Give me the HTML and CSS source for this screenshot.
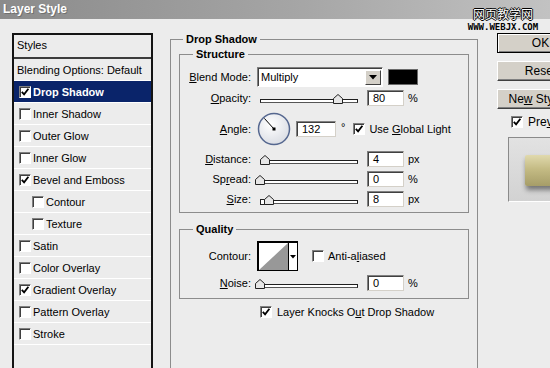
FILE: index.html
```html
<!DOCTYPE html>
<html lang="en">
<head>
    <meta charset="UTF-8">
    <title>Layer Style</title>
    <link rel="stylesheet" href="styles.css">
</head>
<body>
    <div class="titlebar">Layer Style</div>
    <div class="watermark">
        <div class="wm-cn">网页教学网</div>
        <div class="wm-en">WWW.WEBJX.COM</div>
    </div>

    <div class="dialog">
        <div class="styles-list">
            <div class="list-head">Styles</div>
            <div class="list-row plain">Blending Options: Default</div>
            <div class="list-row selected"><span class="check"><svg viewBox="0 0 10 10"><path d="M1.8 4.8l2.3 2.6L8.4 1.8" /></svg></span>Drop Shadow</div>
            <div class="list-row"><span class="check"></span>Inner Shadow</div>
            <div class="list-row"><span class="check"></span>Outer Glow</div>
            <div class="list-row"><span class="check"></span>Inner Glow</div>
            <div class="list-row"><span class="check"><svg viewBox="0 0 10 10"><path d="M1.8 4.8l2.3 2.6L8.4 1.8" /></svg></span>Bevel and Emboss</div>
            <div class="list-row sub"><span class="check"></span>Contour</div>
            <div class="list-row sub"><span class="check"></span>Texture</div>
            <div class="list-row"><span class="check"></span>Satin</div>
            <div class="list-row"><span class="check"></span>Color Overlay</div>
            <div class="list-row"><span class="check"><svg viewBox="0 0 10 10"><path d="M1.8 4.8l2.3 2.6L8.4 1.8" /></svg></span>Gradient Overlay</div>
            <div class="list-row"><span class="check"></span>Pattern Overlay</div>
            <div class="list-row"><span class="check"></span>Stroke</div>
        </div>

        <div class="main">
            <fieldset class="group outer">
                <legend>Drop Shadow</legend>

                <fieldset class="group structure">
                    <legend>Structure</legend>

                    <div class="row blend-row">
                        <span class="lbl"><u>B</u>lend Mode:</span>
                        <div class="select">
                            <span class="select-text">Multiply</span>
                            <span class="drop-btn"><svg viewBox="0 0 8 5"><path d="M0 0h8L4 4.5z" /></svg></span>
                        </div>
                        <span class="swatch"></span>
                    </div>

                    <div class="row opacity-row">
                        <span class="lbl"><u>O</u>pacity:</span>
                        <div class="slider">
                            <div class="track"></div>
                            <svg class="thumb" style="left: 76px" viewBox="0 0 10 10"><path d="M5 0.5L9.5 4.5V9.5H0.5V4.5Z" /></svg>
                        </div>
                        <span class="field">80</span>
                        <span class="unit">%</span>
                    </div>

                    <div class="row angle-row">
                        <span class="lbl"><u>A</u>ngle:</span>
                        <svg class="dial" viewBox="0 0 34 34">
                            <defs>
                                <radialGradient id="dialfill" cx="40%" cy="35%" r="70%">
                                    <stop offset="0" stop-color="#ffffff" />
                                    <stop offset="1" stop-color="#d9dce3" />
                                </radialGradient>
                            </defs>
                            <circle cx="17" cy="17" r="15.5" fill="url(#dialfill)" stroke="#55678f" stroke-width="1.5" />
                            <line x1="17" y1="17" x2="7.4" y2="6.4" stroke="#000" stroke-width="1" />
                            <rect x="15.5" y="15.5" width="3" height="3" fill="#000" />
                        </svg>
                        <span class="field wide">132</span>
                        <span class="degree">°</span>
                        <span class="check gl"><svg viewBox="0 0 10 10"><path d="M1.8 4.8l2.3 2.6L8.4 1.8" /></svg></span>
                        <span class="cb-text">Use <u>G</u>lobal Light</span>
                    </div>

                    <div class="row distance-row">
                        <span class="lbl"><u>D</u>istance:</span>
                        <div class="slider">
                            <div class="track"></div>
                            <svg class="thumb" style="left: 3px" viewBox="0 0 10 10"><path d="M5 0.5L9.5 4.5V9.5H0.5V4.5Z" /></svg>
                        </div>
                        <span class="field">4</span>
                        <span class="unit">px</span>
                    </div>

                    <div class="row spread-row">
                        <span class="lbl">Sp<u>r</u>ead:</span>
                        <div class="slider">
                            <div class="track"></div>
                            <svg class="thumb" style="left: -2px" viewBox="0 0 10 10"><path d="M5 0.5L9.5 4.5V9.5H0.5V4.5Z" /></svg>
                        </div>
                        <span class="field">0</span>
                        <span class="unit">%</span>
                    </div>

                    <div class="row size-row">
                        <span class="lbl"><u>S</u>ize:</span>
                        <div class="slider">
                            <div class="track"></div>
                            <span class="stop"></span>
                            <svg class="thumb" style="left: 7px" viewBox="0 0 10 10"><path d="M5 0.5L9.5 4.5V9.5H0.5V4.5Z" /></svg>
                        </div>
                        <span class="field">8</span>
                        <span class="unit">px</span>
                    </div>
                </fieldset>

                <fieldset class="group quality">
                    <legend>Quality</legend>

                    <div class="row contour-row">
                        <span class="lbl">Contour:</span>
                        <div class="contour">
                            <svg class="contour-preview" viewBox="0 0 29 27" preserveAspectRatio="none">
                                <rect width="29" height="27" fill="#fff" />
                                <path d="M0 27L29 0V27Z" fill="#989898" />
                            </svg>
                            <span class="contour-btn"><svg viewBox="0 0 6 4"><path d="M0 0h6L3 3.5z" /></svg></span>
                        </div>
                        <span class="check aa"></span>
                        <span class="cb-text">Anti-a<u>l</u>iased</span>
                    </div>

                    <div class="row noise-row">
                        <span class="lbl"><u>N</u>oise:</span>
                        <div class="slider">
                            <div class="track"></div>
                            <svg class="thumb" style="left: -2px" viewBox="0 0 10 10"><path d="M5 0.5L9.5 4.5V9.5H0.5V4.5Z" /></svg>
                        </div>
                        <span class="field">0</span>
                        <span class="unit">%</span>
                    </div>
                </fieldset>

                <div class="knock-row">
                    <span class="check"><svg viewBox="0 0 10 10"><path d="M1.8 4.8l2.3 2.6L8.4 1.8" /></svg></span>
                    <span class="cb-text">Layer Knocks O<u>u</u>t Drop Shadow</span>
                </div>
            </fieldset>
        </div>

        <div class="side">
            <div class="btn default">OK</div>
            <div class="btn">Reset</div>
            <div class="btn">Ne<u>w</u> Style...</div>
            <div class="preview-row">
                <span class="check"><svg viewBox="0 0 10 10"><path d="M1.8 4.8l2.3 2.6L8.4 1.8" /></svg></span>
                <span class="cb-text">Pre<u>v</u>iew</span>
            </div>
            <div class="preview-box">
                <div class="preview-swatch"></div>
            </div>
        </div>
    </div>
</body>
</html>
```

FILE: styles.css
```css
body {
    margin: 0;
    width: 550px;
    height: 368px;
    overflow: hidden;
    position: relative;
    background-color: #ececec;
    font-family: "Liberation Sans", Arial, sans-serif;
    font-size: 11px;
    color: #000;
}
u {
    text-decoration: underline;
    text-underline-offset: 1px;
}
.titlebar {
    height: 19px;
    line-height: 19px;
    padding-left: 3px;
    background: linear-gradient(to right, #8b8b8b, #a6a6a6 55%, #c2c2c2);
    color: #fff;
    font-weight: bold;
    font-size: 12px;
    text-shadow: 1px 1px 0 #707070;
}
.watermark {
    position: absolute;
    top: 6px;
    left: 466px;
    width: 74px;
    text-align: center;
}
.wm-cn {
    font-family: "Noto Sans CJK SC", sans-serif;
    font-size: 12px;
    line-height: 16px;
    color: #fff;
    text-shadow: 1px 0 0 #000, -1px 0 0 #000, 0 1px 0 #000, 0 -1px 0 #000;
}
.wm-en {
    font-family: "DejaVu Sans Mono", monospace;
    font-weight: bold;
    font-size: 9px;
    line-height: 10px;
    color: #000;
}
.dialog {
    display: flex;
    align-items: flex-start;
    padding: 14px 0 0 12px;
}

/* styles list */
.styles-list {
    flex-shrink: 0;
    width: 137px;
    height: 340px;
    border: 2px solid #141414;
    border-bottom: none;
}
.list-head {
    height: 22px;
    line-height: 21px;
    padding-left: 3px;
    border-bottom: 2px solid #3c3c3c;
}
.list-row {
    height: 21px;
    border-bottom: 1px solid #fff;
    display: flex;
    align-items: center;
    gap: 2px;
    padding-left: 5px;
    white-space: nowrap;
}
.list-row.plain {
    padding-left: 3px;
}
.list-row.sub {
    padding-left: 18px;
}
.list-row.selected {
    background-color: #0a246a;
    color: #fff;
    font-weight: bold;
}
.check {
    flex-shrink: 0;
    display: inline-block;
    width: 12px;
    height: 12px;
    box-sizing: border-box;
    border: 1px solid;
    border-color: #808080 #fff #fff #808080;
    box-shadow: inset 1px 1px 0 #404040;
    background-color: #fff;
}
.check svg {
    display: block;
    width: 10px;
    height: 10px;
}
.check path {
    fill: none;
    stroke: #000;
    stroke-width: 1.8;
}

/* main panel */
.main {
    flex-shrink: 0;
    width: 308px;
    margin-left: 17px;
}
fieldset.group {
    margin: 0;
    padding: 0;
    min-width: 0;
    border: 1px solid #8c8c8c;
}
legend {
    font-weight: bold;
    line-height: 13px;
    padding: 0 3px;
}
.outer {
    padding: 0 8px 60px !important;
}
.outer > legend {
    margin-left: 4px;
}
.structure > legend,
.quality > legend {
    margin-left: 13px;
}
.structure {
    margin-top: 2px !important;
    padding: 6px 0 5px !important;
}
.quality {
    margin-top: 10px !important;
    padding: 5px 0 7px !important;
}
.row {
    display: flex;
    align-items: center;
    height: 16px;
    white-space: nowrap;
}
.lbl {
    flex-shrink: 0;
    width: 71px;
    margin-right: 6px;
    text-align: right;
}
.blend-row {
    height: 20px;
}
.opacity-row {
    margin-top: 3px;
}
.angle-row {
    height: 33px;
    margin-top: 6px;
}
.distance-row {
    margin-top: 6px;
}
.spread-row,
.size-row {
    margin-top: 4px;
}
.select {
    display: flex;
    width: 126px;
    height: 20px;
    box-sizing: border-box;
    border: 1px solid;
    border-color: #808080 #fff #fff #808080;
    box-shadow: inset 1px 1px 0 #404040;
    background-color: #fff;
}
.select-text {
    flex: 1;
    padding: 3px 0 0 3px;
}
.drop-btn {
    width: 16px;
    margin: 2px 1px 1px 0;
    box-sizing: border-box;
    background-color: #d4d0c8;
    border: 1px solid;
    border-color: #fff #404040 #404040 #fff;
    display: flex;
    align-items: center;
    justify-content: center;
}
.drop-btn svg {
    width: 8px;
    height: 5px;
}
.swatch {
    width: 30px;
    height: 16px;
    margin-left: 5px;
    box-sizing: border-box;
    background-color: #000;
    border: 1px solid #6a6a6a;
}
.slider {
    position: relative;
    flex-shrink: 0;
    width: 104px;
    height: 16px;
    margin-right: 6px;
}
.track {
    margin: 9px 3px 0;
    height: 2px;
    border: 1px solid #1e1e1e;
    border-bottom-color: #555;
    background-color: #fff;
}
.thumb {
    position: absolute;
    top: 4px;
    width: 10px;
    height: 10px;
}
.thumb path {
    fill: #e6e6e6;
    stroke: #222;
    stroke-width: 1;
}
.stop {
    position: absolute;
    left: 3px;
    top: 8px;
    width: 4px;
    height: 4px;
    border: 1px solid #222;
    background-color: #fff;
}
.field {
    flex-shrink: 0;
    width: 37px;
    height: 16px;
    box-sizing: border-box;
    border: 1px solid;
    border-color: #808080 #d4d0c8 #d4d0c8 #808080;
    box-shadow: inset 1px 1px 0 #404040;
    background-color: #fff;
    padding-left: 5px;
    line-height: 15px;
}
.field.wide {
    width: 40px;
}
.unit {
    margin-left: 4px;
}
.dial {
    flex-shrink: 0;
    width: 34px;
    height: 34px;
    margin-right: 5px;
}
.degree {
    margin-left: 5px;
    align-self: flex-start;
    margin-top: 9px;
}
.check.gl {
    margin-left: 8px;
}
.cb-text {
    margin-left: 4px;
}
.contour-row {
    height: 30px;
}
.contour {
    display: flex;
    width: 41px;
    height: 30px;
    box-sizing: border-box;
    border: 1px solid #000;
    border-width: 2px 1px 1px 2px;
}
.contour-preview {
    width: 29px;
    height: 27px;
}
.contour-btn {
    flex: 1;
    border-left: 1px solid #000;
    background-color: #fff;
    display: flex;
    align-items: center;
    justify-content: center;
}
.contour-btn svg {
    width: 6px;
    height: 4px;
}
.check.aa {
    margin-left: 14px;
}
.noise-row {
    margin-top: 4px;
}
.knock-row {
    display: flex;
    align-items: center;
    height: 12px;
    margin-top: 7px;
    padding-left: 81px;
    white-space: nowrap;
}
.knock-row .cb-text {
    margin-left: 5px;
}

/* right side */
.side {
    flex-shrink: 0;
    width: 87px;
    margin-left: 19px;
    display: flex;
    flex-direction: column;
}
.btn {
    height: 20px;
    box-sizing: border-box;
    margin-bottom: 8px;
    background-color: #d4d0c8;
    border: 1px solid;
    border-color: #fff #404040 #404040 #fff;
    box-shadow: inset -1px -1px 0 #808080;
    font-size: 12px;
    line-height: 18px;
    text-align: center;
    white-space: nowrap;
}
.btn.default {
    border-color: #000;
    box-shadow: inset 1px 1px 0 #fff, inset -1px -1px 0 #808080;
}
.preview-row {
    display: flex;
    align-items: center;
    height: 12px;
    margin-top: -1px;
    padding-left: 14px;
    font-size: 12px;
    white-space: nowrap;
}
.preview-row .cb-text {
    margin-left: 5px;
}
.preview-box {
    width: 70px;
    height: 65px;
    margin: 9px 0 0 11px;
    box-sizing: border-box;
    border: 1px solid;
    border-color: #8a8a8a #fff #fff #8a8a8a;
    background: linear-gradient(#e2e2e2, #d2d2d2);
    padding: 17px 0 0 16px;
}
.preview-swatch {
    width: 50px;
    height: 31px;
    background: linear-gradient(#e0d9ad, #c4bb84 45%, #a69d68);
    box-shadow: 1px 4px 5px rgba(0, 0, 0, 0.45);
    border-radius: 2px 0 0 2px;
}
```
